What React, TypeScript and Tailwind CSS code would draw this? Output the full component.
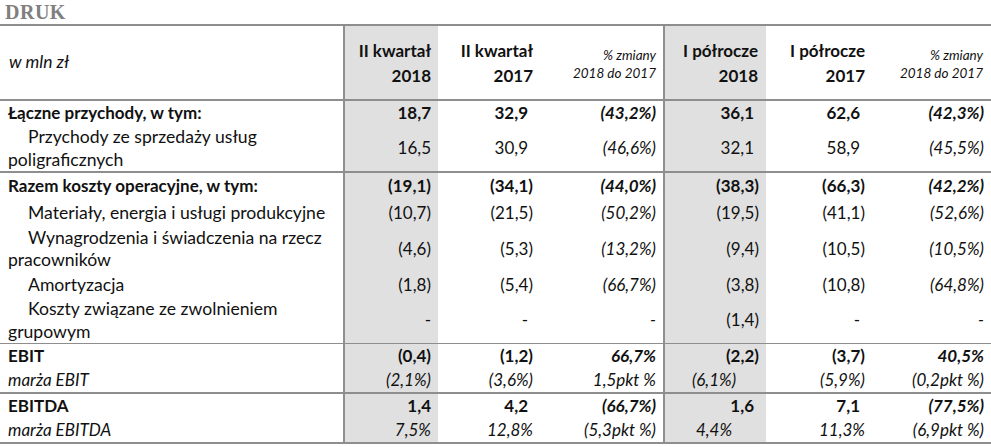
import React from "react";

type Row = {
  label: React.ReactNode;
  values: string[];
  kind: "bold" | "sub" | "margin";
  h: string;
  border?: string;
};

const rows: Row[] = [
  {
    label: "Łączne przychody, w tym:",
    values: ["18,7", "32,9", "(43,2%)", "36,1", "62,6", "(42,3%)"],
    kind: "bold",
    h: "h-[25px]",
  },
  {
    label: (
      <>
        Przychody ze sprzedaży usług
        <br />
        poligraficznych
      </>
    ),
    values: ["16,5", "30,9", "(46,6%)", "32,1", "58,9", "(45,5%)"],
    kind: "sub",
    h: "h-[47px]",
    border: "border-b-2",
  },
  {
    label: "Razem koszty operacyjne, w tym:",
    values: ["(19,1)", "(34,1)", "(44,0%)", "(38,3)", "(66,3)", "(42,2%)"],
    kind: "bold",
    h: "h-[27px]",
  },
  {
    label: "Materiały, energia i usługi produkcyjne",
    values: ["(10,7)", "(21,5)", "(50,2%)", "(19,5)", "(41,1)", "(52,6%)"],
    kind: "sub",
    h: "h-[26px]",
  },
  {
    label: (
      <>
        Wynagrodzenia i świadczenia na rzecz
        <br />
        pracowników
      </>
    ),
    values: ["(4,6)", "(5,3)", "(13,2%)", "(9,4)", "(10,5)", "(10,5%)"],
    kind: "sub",
    h: "h-[46px]",
  },
  {
    label: "Amortyzacja",
    values: ["(1,8)", "(5,4)", "(66,7%)", "(3,8)", "(10,8)", "(64,8%)"],
    kind: "sub",
    h: "h-[26px]",
  },
  {
    label: (
      <>
        Koszty związane ze zwolnieniem
        <br />
        grupowym
      </>
    ),
    values: ["-", "-", "-", "(1,4)", "-", "-"],
    kind: "sub",
    h: "h-[46px]",
    border: "border-b",
  },
  {
    label: "EBIT",
    values: ["(0,4)", "(1,2)", "66,7%", "(2,2)", "(3,7)", "40,5%"],
    kind: "bold",
    h: "h-[24px]",
  },
  {
    label: "marża EBIT",
    values: ["(2,1%)", "(3,6%)", "1,5pkt %", "(6,1%)", "(5,9%)", "(0,2pkt %)"],
    kind: "margin",
    h: "h-[26px]",
    border: "border-b-2",
  },
  {
    label: "EBITDA",
    values: ["1,4", "4,2", "(66,7%)", "1,6", "7,1", "(77,5%)"],
    kind: "bold",
    h: "h-[24px]",
  },
  {
    label: "marża EBITDA",
    values: ["7,5%", "12,8%", "(5,3pkt %)", "4,4%", "11,3%", "(6,9pkt %)"],
    kind: "margin",
    h: "h-[26px]",
    border: "border-b-2",
  },
];

const grid =
  "grid grid-cols-[343px_95px_102px_123px_103px_106px_119px] border-[#8e8e8e]";

// gray shaded columns (II kw. 2018 and I półrocze 2018)
const colBg = [
  "bg-[#e0e0e0] border-l-2 border-[#8e8e8e]",
  "",
  "",
  "bg-[#e0e0e0] border-l-2 border-[#8e8e8e]",
  "",
  "",
];

function Cell({ v, i, kind }: { v: string; i: number; kind: Row["kind"] }) {
  const isPct = i === 2 || i === 5;
  // excel-style "_)" padding for positive numbers and dashes
  const reserve = !isPct && !v.endsWith(")") && kind !== "margin" && i !== 0;
  const centered = kind === "margin" && i === 3;
  return (
    <div
      className={`${colBg[i]} flex items-center ${centered ? "justify-center pl-[4px]" : "justify-end"} ${
        reserve ? "pr-[12px]" : "pr-[7px]"
      } ${isPct || kind === "margin" ? "italic" : ""} ${kind === "bold" ? "font-bold" : ""}`}
    >
      {v}
    </div>
  );
}

export default function App() {
  return (
    <div className="w-[991px] h-[447px] bg-white text-[#111] font-['Lato',sans-serif] text-[17px] leading-[22.5px] overflow-hidden">
      <div className="h-[24px] pl-[5px] pt-[1px] font-['Liberation_Serif',serif] font-bold text-[20px] leading-[22px] tracking-[0.5px] text-[#7f7f7f]">
        DRUK
      </div>

      <div className={`${grid} h-[77px] border-t-2 border-b-2`}>
        <div className="flex items-center pl-[9px] italic text-[17.5px]">w mln zł</div>
        <div className={`${colBg[0]} flex flex-col items-end justify-center pr-[7px] font-bold leading-[25px]`}>
          <span>II kwartał</span>
          <span>2018</span>
        </div>
        <div className="flex flex-col items-end justify-center pr-[7px] font-bold leading-[25px]">
          <span>II kwartał</span>
          <span>2017</span>
        </div>
        <div className="flex flex-col items-end justify-center pr-[7px] italic text-[13.5px] leading-[18px] pt-[3px]">
          <span>% zmiany</span>
          <span>2018 do 2017</span>
        </div>
        <div className={`${colBg[3]} flex flex-col items-end justify-center pr-[8px] font-bold leading-[25px]`}>
          <span>I półrocze</span>
          <span>2018</span>
        </div>
        <div className="flex flex-col items-end justify-center pr-[7px] font-bold leading-[25px]">
          <span>I półrocze</span>
          <span>2017</span>
        </div>
        <div className="flex flex-col items-end justify-center pr-[8px] italic text-[13.5px] leading-[18px] pt-[3px]">
          <span>% zmiany</span>
          <span>2018 do 2017</span>
        </div>
      </div>

      {rows.map((r, idx) => (
        <div key={idx} className={`${grid} ${r.h} ${r.border ?? ""}`}>
          <div
            className={`flex items-center pl-[8px] whitespace-nowrap ${
              r.kind === "bold" ? "font-bold" : ""
            } ${r.kind === "margin" ? "italic" : ""} ${r.kind === "sub" ? "text-[17.6px]" : ""}`}
          >
            <div className={r.kind === "sub" ? "indent-5" : ""}>{r.label}</div>
          </div>
          {r.values.map((v, i) => (
            <Cell key={i} v={v} i={i} kind={r.kind} />
          ))}
        </div>
      ))}
    </div>
  );
}
